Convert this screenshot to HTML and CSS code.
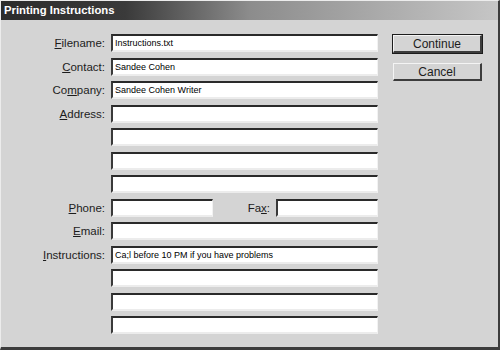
FILE: index.html
```html
<!DOCTYPE html>
<html lang="en">
<head>
    <meta charset="UTF-8">
    <title>Printing Instructions</title>
    <link rel="stylesheet" href="styles.css">
</head>
<body>
    <div class="dialog">
        <div class="titlebar">Printing Instructions</div>
        <div class="content">
            <div class="form">
                <label class="label"><u>F</u>ilename:</label>
                <input class="field" type="text" value="Instructions.txt">

                <label class="label"><u>C</u>ontact:</label>
                <input class="field" type="text" value="Sandee Cohen">

                <label class="label">Co<u>m</u>pany:</label>
                <input class="field" type="text" value="Sandee Cohen Writer">

                <label class="label"><u>A</u>ddress:</label>
                <input class="field" type="text">
                <span></span>
                <input class="field" type="text">
                <span></span>
                <input class="field" type="text">
                <span></span>
                <input class="field" type="text">

                <label class="label"><u>P</u>hone:</label>
                <div class="split">
                    <input class="field short" type="text">
                    <div class="fax">
                        <label class="label">Fa<u>x</u>:</label>
                        <input class="field short" type="text">
                    </div>
                </div>

                <label class="label"><u>E</u>mail:</label>
                <input class="field" type="text">

                <label class="label"><u>I</u>nstructions:</label>
                <input class="field" type="text" value="Ca;l before 10 PM if you have problems">
                <span></span>
                <input class="field" type="text">
                <span></span>
                <input class="field" type="text">
                <span></span>
                <input class="field" type="text">
            </div>
            <div class="buttons">
                <button class="button default">Continue</button>
                <button class="button">Cancel</button>
            </div>
        </div>
    </div>
</body>
</html>
```

FILE: styles.css
```css
body {
    margin: 0;
    padding: 0;
    background-color: #d4d4d4;
    font-family: "Liberation Sans", Arial, sans-serif;
}
.dialog {
    box-sizing: border-box;
    width: 500px;
    height: 350px;
    background-color: #d4d4d4;
    border-top: 1px solid #ececec;
    border-left: 1px solid #ececec;
    border-right: 2px solid #3c3c3c;
    border-bottom: 3px solid #3c3c3c;
}
.titlebar {
    height: 19px;
    line-height: 19px;
    padding-left: 3px;
    color: #ffffff;
    font-weight: bold;
    font-size: 11.3px;
    background: linear-gradient(to right, #2c2c2c 0%, #3a3a3a 25%, #8c8c8c 50%, #c6c6c6 100%);
}
.content {
    display: flex;
    align-items: flex-start;
    padding-top: 14px;
}
.form {
    display: grid;
    grid-template-columns: 104px 267px;
    grid-auto-rows: 18px;
    column-gap: 6px;
    row-gap: 5.5px;
}
.label {
    font-size: 11.5px;
    color: #1c1c1c;
    text-align: right;
    line-height: 18px;
    white-space: nowrap;
}
.field {
    box-sizing: border-box;
    width: 100%;
    height: 18px;
    margin: 0;
    padding: 0 2px;
    background-color: #ffffff;
    border-style: solid;
    border-width: 2px 1px 2px 2px;
    border-color: #2a2a2a #f2f2f2 #ececec #3a3a3a;
    font-family: "Liberation Sans", Arial, sans-serif;
    font-size: 9px;
    color: #000000;
    outline: none;
}
.split {
    display: flex;
    justify-content: space-between;
}
.short {
    width: 102px;
}
.fax {
    display: flex;
    gap: 6px;
}
.buttons {
    display: flex;
    flex-direction: column;
    gap: 10px;
    margin-left: 15px;
    padding-top: 1px;
}
.button {
    box-sizing: border-box;
    width: 89px;
    height: 18px;
    padding: 0;
    background-color: #d4d4d4;
    border-style: solid;
    border-width: 1px 2px 2px 1px;
    border-color: #f4f4f4 #3c3c3c #3c3c3c #f4f4f4;
    font-family: "Liberation Sans", Arial, sans-serif;
    font-size: 12px;
    color: #1c1c1c;
}
.default {
    outline: 1px solid #1c1c1c;
}
```
